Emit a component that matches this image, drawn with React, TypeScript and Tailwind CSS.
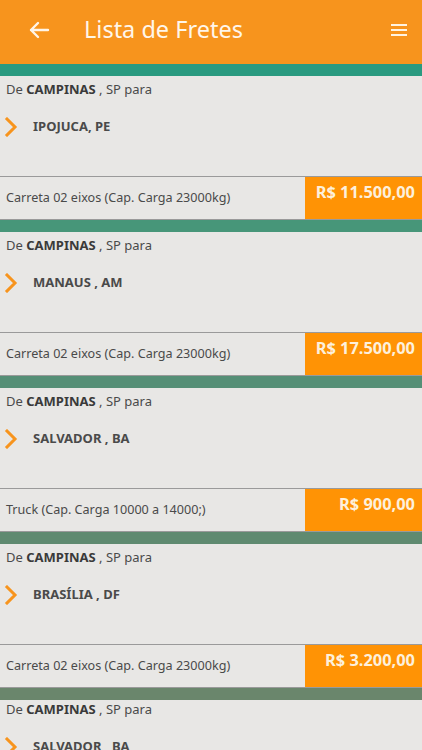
import React from "react";

type Item = { dest: string; desc: string; price: string; band: string };

const items: Item[] = [
  { dest: "IPOJUCA, PE", desc: "Carreta 02 eixos (Cap. Carga 23000kg)", price: "R$ 11.500,00", band: "bg-[#2a9a80]" },
  { dest: "MANAUS , AM", desc: "Carreta 02 eixos (Cap. Carga 23000kg)", price: "R$ 17.500,00", band: "bg-[#479679]" },
  { dest: "SALVADOR , BA", desc: "Truck (Cap. Carga 10000 a 14000;)", price: "R$ 900,00", band: "bg-[#558f76]" },
  { dest: "BRASÍLIA , DF", desc: "Carreta 02 eixos (Cap. Carga 23000kg)", price: "R$ 3.200,00", band: "bg-[#5f8a70]" },
  { dest: "SALVADOR , BA", desc: "", price: "", band: "bg-[#6a866c]" },
];

function Chevron() {
  return (
    <svg width="14" height="20" viewBox="0 0 14 20" fill="none">
      <path d="M3 2 L11 10 L3 18" stroke="#f7941d" strokeWidth="3" strokeLinecap="square" strokeLinejoin="miter" />
    </svg>
  );
}

function Card({ item, last }: { item: Item; last?: boolean }) {
  return (
    <div>
      <div className={`h-[12px] ${item.band}`} />
      <div className={`${last ? "h-[60px] pt-0" : "h-[100px] pt-[4px]"} bg-[#e8e7e5] flex flex-col`}>
        <div className="pl-[6px] text-[13px] text-[#4a4a4a] leading-[18px]">
          De <span className="font-bold text-[#3a3a3a]">CAMPINAS</span> , SP para
        </div>
        <div className="flex items-center pl-[4px] mt-[19px] h-[20px]">
          <Chevron />
          <span className="ml-[15px] text-[13px] font-bold text-[#4a4a4a]">{item.dest}</span>
        </div>
      </div>
      {!last && (
        <div className="border-t border-b border-[#9a9a9a] bg-[#e8e7e5] h-[44px] flex">
          <div className="flex-1 flex items-center pl-[6px] text-[12.6px] text-[#4a4a4a]">{item.desc}</div>
          <div className="w-[117px] bg-[#ff9305] flex justify-end pr-[7px] pt-[4px] text-[16.4px] font-bold text-[#fdf0dc] leading-[22px]">
            {item.price}
          </div>
        </div>
      )}
    </div>
  );
}

export default function App() {
  return (
    <div className="w-[422px] h-[750px] overflow-hidden bg-[#e8e7e5]" style={{ fontFamily: '"Noto Sans", "Open Sans", sans-serif' }}>
      <div className="h-[64px] bg-[#f7941d] flex items-center pb-[5px]">
        <div className="w-[75px] flex justify-center pl-[2px]">
          <svg width="22" height="20" viewBox="0 0 22 20" fill="none">
            <path d="M20 10 H3 M10 3 L3 10 L10 17" stroke="#fff5e8" strokeWidth="2.4" strokeLinecap="round" strokeLinejoin="round" />
          </svg>
        </div>
        <div className="ml-[9px] text-[23.5px] text-[#fff6ea]">Lista de Fretes</div>
        <div className="ml-auto mr-[15px]">
          <svg width="16" height="12" viewBox="0 0 16 12">
            <rect x="0" y="0" width="16" height="2" fill="#fff3e0" />
            <rect x="0" y="5" width="16" height="2" fill="#fff3e0" />
            <rect x="0" y="10" width="16" height="2" fill="#fff3e0" />
          </svg>
        </div>
      </div>
      {items.map((it, i) => (
        <Card key={i} item={it} last={i === items.length - 1} />
      ))}
    </div>
  );
}
